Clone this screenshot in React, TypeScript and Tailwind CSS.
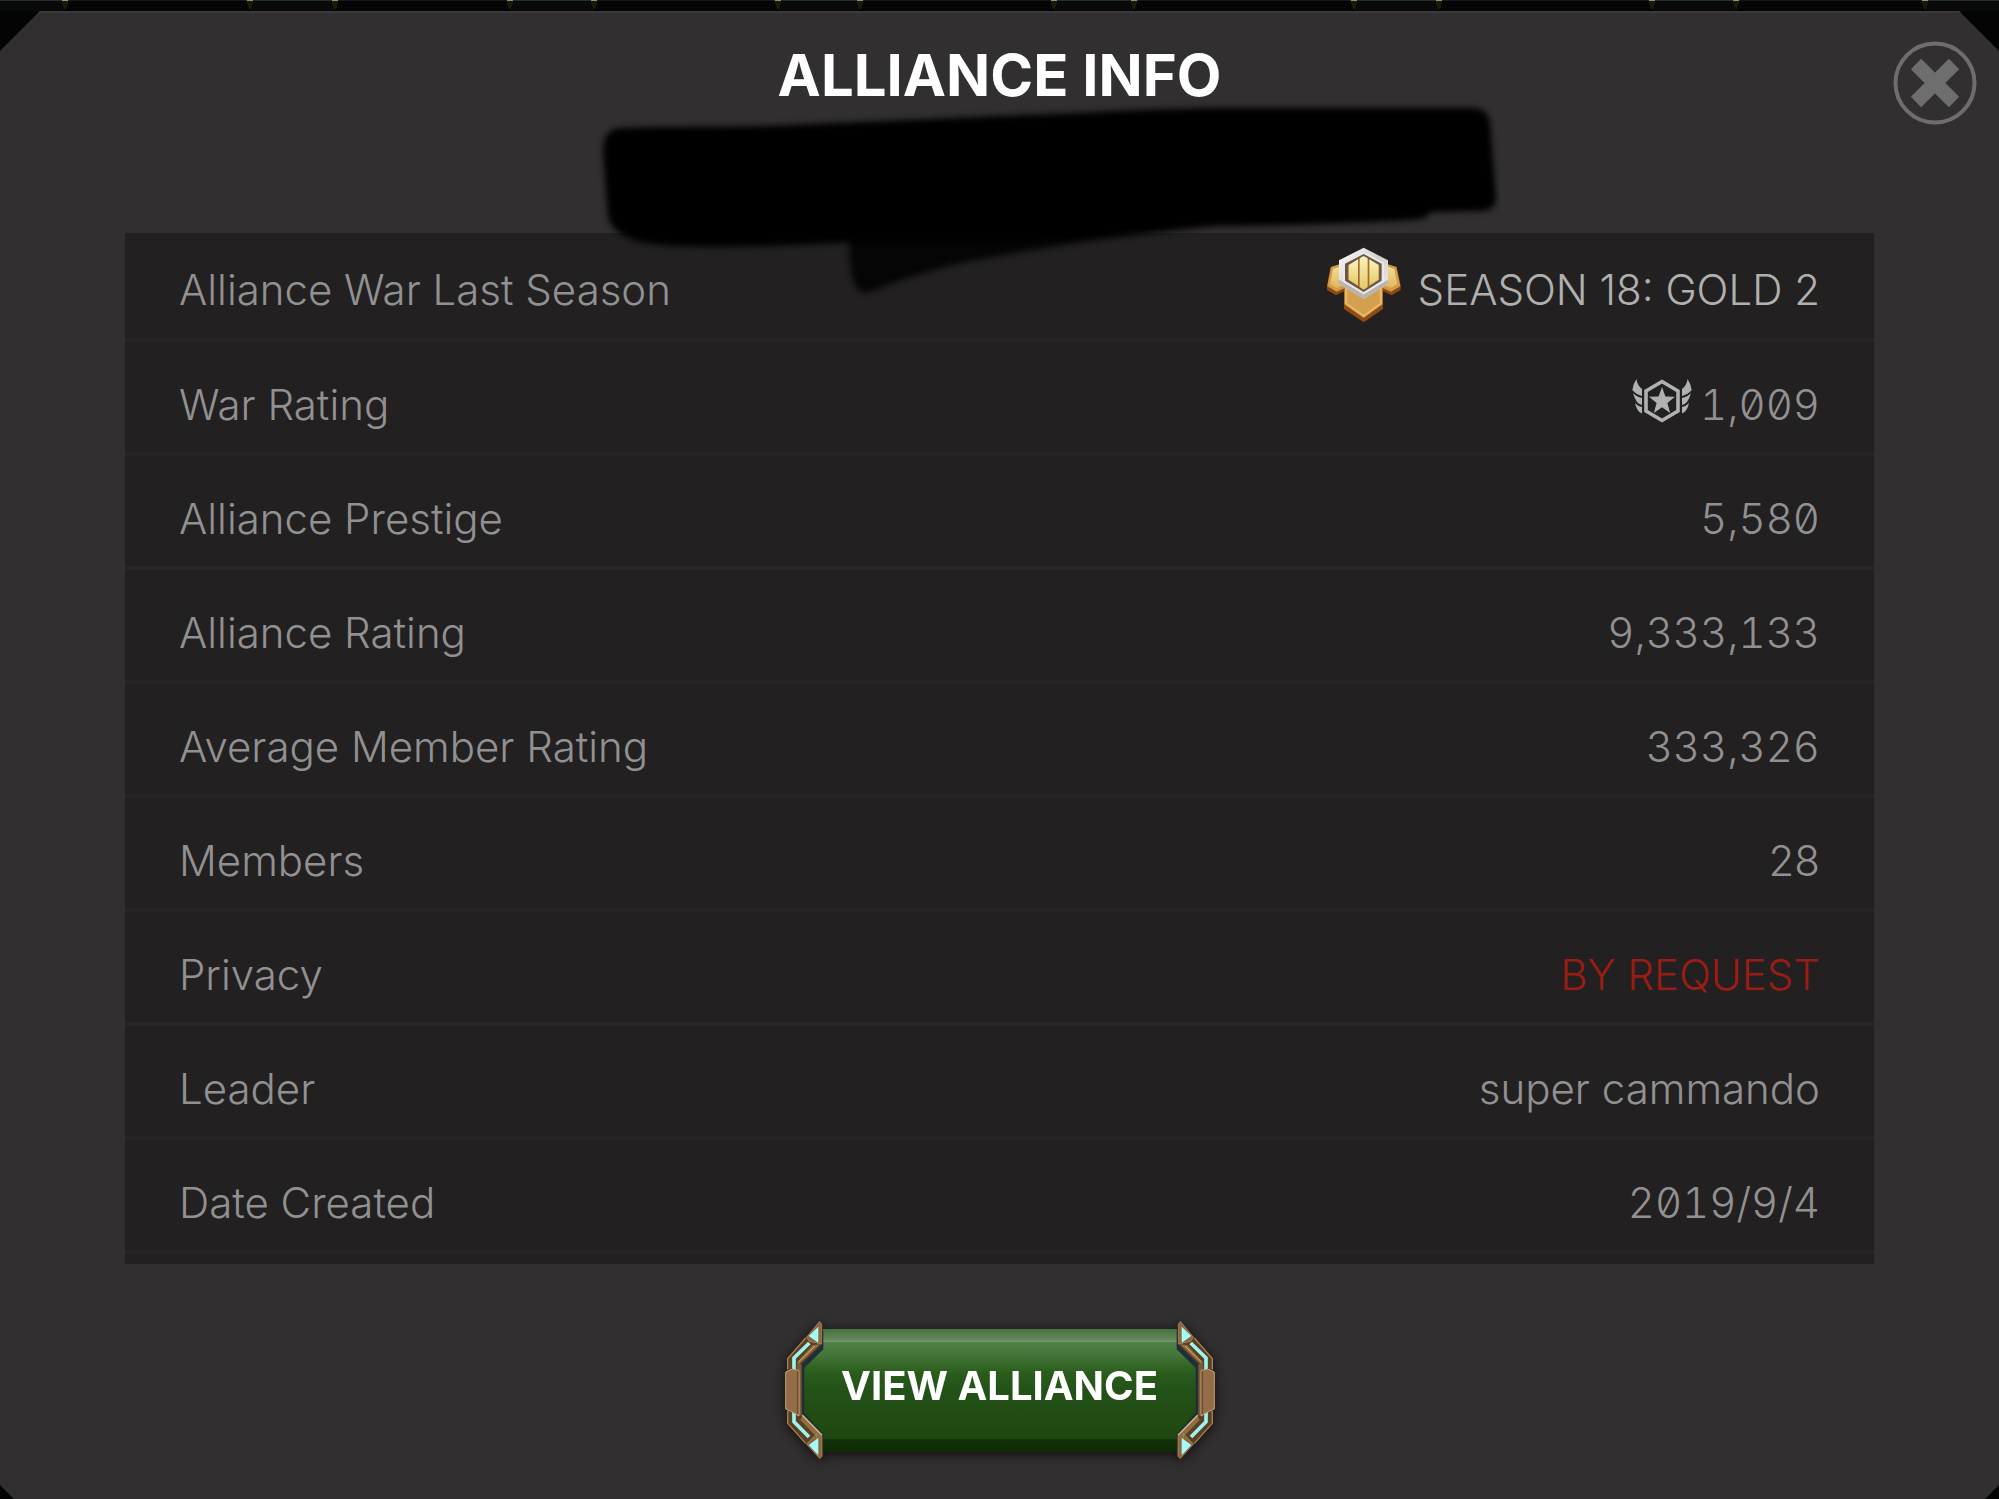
import type { ReactNode } from "react"

type Row = {
  label: string
  value: string
  icon?: ReactNode
  valueClass?: string
}

function SeasonBadge() {
  return (
    <svg viewBox="0 0 270 270" className="size-[90px] shrink-0" aria-hidden="true">
      <defs>
        <linearGradient id="goldWing" x1="0" y1="0" x2="0" y2="1">
          <stop offset="0" stopColor="#f3e29a" />
          <stop offset="1" stopColor="#dfb65e" />
        </linearGradient>
        <linearGradient id="goldBar" x1="0" y1="0" x2="0" y2="1">
          <stop offset="0" stopColor="#fbf3bd" />
          <stop offset="1" stopColor="#e3c867" />
        </linearGradient>
        <linearGradient id="silverRim" x1="0" y1="0" x2="1" y2="1">
          <stop offset="0" stopColor="#ffffff" />
          <stop offset="0.5" stopColor="#d3cfcd" />
          <stop offset="1" stopColor="#f1eeec" />
        </linearGradient>
      </defs>
      {/* wings */}
      <path d="M44 78 L90 66 V148 L60 163 L33 147 V133Z" fill="#8a4a14" />
      <path d="M242 78 L196 66 V148 L227 163 L254 147 V133Z" fill="#8a4a14" />
      <path d="M45 78 L100 60 V135 L62 152 L34 136Z" fill="#d49a45" />
      <path d="M241 78 L186 60 V135 L225 152 L253 136Z" fill="#d49a45" />
      <path d="M51 84 L90 70 V128 L63 141 L43 130Z" fill="url(#goldWing)" />
      <path d="M235 84 L196 70 V128 L224 141 L244 130Z" fill="url(#goldWing)" />
      {/* lower plate */}
      <path d="M84 140 H201 V204 L143 244 L84 204Z" fill="#8f4d15" />
      <path d="M86 135 H199 V190 L143 230 L86 190Z" fill="#e8b765" />
      <path d="M94 135 H191 V186 L143 221 L94 186Z" fill="#d2a04e" />
      {/* silver hexagon */}
      <path d="M143 20 L216 58 V128 L143 174 L69 128 V58Z" fill="url(#silverRim)" />
      <path d="M69 116 L143 160 L216 116 V128 L143 174 L69 128Z" fill="#b9b4b2" />
      <path d="M143 33 L204 65 V122 L143 160 L81 122 V65Z" fill="#ece9e7" />
      <path d="M143 39 L197 68 V119 L143 153 L87 119 V68Z" fill="#65564e" />
      <path d="M143 47 L190 73 V116 L143 146 L95 116 V73Z" fill="#a5682a" />
      {/* bars */}
      <path d="M98 72 L126 55 V134 L98 116Z" fill="url(#goldBar)" />
      <path d="M131 52 L143 45 L155 52 V138 L143 146 L131 138Z" fill="url(#goldBar)" />
      <path d="M160 55 L188 72 V116 L160 134Z" fill="url(#goldBar)" />
    </svg>
  )
}

function WarEmblem() {
  return (
    <svg viewBox="0 0 60 44" className="h-[44px] w-[60px] shrink-0" fill="#b1b1b1" aria-hidden="true">
      <path d="M30 2.5 L46 12 V32 L30 41.5 L14 32 V12Z" fill="none" stroke="#b1b1b1" strokeWidth="3.6" />
      <path d="M30 8 L33.4 17.6 L43 17.8 L35.4 24 L38.2 34 L30 28.2 L21.8 34 L24.6 24 L17 17.8 L26.6 17.6Z" />
      <path d="M4.5 0 Q5 6 10 10 V17 Q4 15.5 0.3 11 Q1 5 4.5 0Z" />
      <path d="M1 14 Q4.5 18 10 19 V26 Q4 25 1 14Z" />
      <path d="M3 24 Q6 27.5 10 28 V34.5 Q5 33 3 24Z" />
      <path d="M55.5 0 Q55 6 50 10 V17 Q56 15.5 59.7 11 Q59 5 55.5 0Z" />
      <path d="M59 14 Q55.5 18 50 19 V26 Q56 25 59 14Z" />
      <path d="M57 24 Q54 27.5 50 28 V34.5 Q55 33 57 24Z" />
    </svg>
  )
}

const rows: Row[] = [
  {
    label: "Alliance War Last Season",
    value: "SEASON 18: GOLD 2",
    icon: <SeasonBadge />,
    valueClass: "gap-3 text-[#b1b0b0] [font-feature-settings:'zero']",
  },
  {
    label: "War Rating",
    value: "1,009",
    icon: <WarEmblem />,
    valueClass: "gap-2 [font-feature-settings:'zero','tnum']",
  },
  { label: "Alliance Prestige", value: "5,580", valueClass: "[font-feature-settings:'zero','tnum']" },
  { label: "Alliance Rating", value: "9,333,133", valueClass: "[font-feature-settings:'zero','tnum']" },
  { label: "Average Member Rating", value: "333,326", valueClass: "[font-feature-settings:'zero','tnum']" },
  { label: "Members", value: "28" },
  { label: "Privacy", value: "BY REQUEST", valueClass: "text-[#9c1c13]" },
  { label: "Leader", value: "super cammando" },
  { label: "Date Created", value: "2019/9/4", valueClass: "[font-feature-settings:'zero','tnum']" },
]

// Pairs of gold studs peeking out above the panel, joined by a lit rail
const rails = [
  [-10, 65],
  [250, 335],
  [510, 594],
  [778, 860],
  [1054, 1134],
  [1354, 1439],
  [1652, 1736],
  [1925, 2010],
]

function TopTrim() {
  return (
    <svg
      viewBox="0 0 1999 11"
      preserveAspectRatio="none"
      className="h-[11px] w-full"
      aria-hidden="true"
    >
      <rect width="1999" height="1" fill="#171718" />
      {rails.map(([from, to]) => (
        <g key={from}>
          <rect x={from} width={to - from} height="11" fill="#080a09" />
          <rect x={from} width={to - from} height="1" fill="#2b302f" />
          {[from, to].map((x) => (
            <g key={x}>
              <path d={`M${x - 4} 0 h8 l-3 9 h-2Z`} fill="#1a190a" />
              <rect x={x - 3} width="6" height="1" fill="#8a9a6a" />
            </g>
          ))}
        </g>
      ))}
    </svg>
  )
}

/* Marker stroke that hides the alliance name */
function Redaction() {
  return (
    <svg
      viewBox="500 90 1000 220"
      className="pointer-events-none absolute top-[78px] left-1/2 z-10 w-[1000px] -translate-x-1/2"
      aria-hidden="true"
    >
      <defs>
        <filter id="soft" x="-5%" y="-10%" width="110%" height="120%" colorInterpolationFilters="sRGB">
          <feGaussianBlur stdDeviation="3" />
        </filter>
      </defs>
      <g filter="url(#soft)">
        <path
          d="M849 240 Q849 268 855 284 Q860 294 872 290 Q915 272 970 260 Q1060 244 1120 235 L1215 222 L1100 215Z"
          fill="#050505"
        />
        <path
          d="M618 127 C680 125 740 127 790 124 L1000 115 C1080 112 1150 108 1215 107 H1472 Q1488 107 1490 122 L1496 196 Q1497 209 1482 210 L1430 211 Q1428 218 1412 219 Q1300 225 1215 225 Q1160 231 1100 238 Q960 244 850 241 Q760 247 682 245 Q612 244 608 214 L603 150 Q603 130 618 127Z"
          fill="#000000"
        />
      </g>
    </svg>
  )
}

function ButtonClamp({ side }: { side: "left" | "right" }) {
  return (
    <svg
      viewBox="30 30 120 420"
      className={
        side === "left"
          ? "absolute top-0 left-0 h-[140px] w-[40px]"
          : "absolute top-0 right-0 h-[140px] w-[40px] -scale-x-100"
      }
      aria-hidden="true"
    >
      <path d="M145 60 V118 L88 174 V308 L145 372 V440 L136 440 V380 L76 320 V160 L136 100 V60Z" fill="#1e2f3a" />
      {/* upper arm */}
      <path d="M135 32 L142 42 V102 L78 164 V190 H36 V145 L92 82Z" fill="#5b3f22" />
      <path d="M133 35 L95 82 L103 94 L139 102 V42Z" fill="#8a6640" stroke="#b3936a" strokeWidth="2" />
      <path d="M135 103 L72 163 L66 158 L112 106Z" fill="#8e6d42" />
      <path d="M120 108 L70 156" stroke="#c4ad78" strokeWidth="3" />
      <path d="M92 84 L38 146 V178" stroke="#a88259" strokeWidth="4" fill="none" />
      <path d="M103 99 L57 144 V180" stroke="#9bf5ee" strokeWidth="11" fill="none" />
      <path d="M130 50 V98 L101 78Z" fill="#a5fbf6" />
      {/* lower arm */}
      <path d="M36 296 V340 L92 402 L134 448 L143 440 V375 L85 315 L72 300Z" fill="#5b3f22" />
      <path d="M82 318 L139 377 L128 384 L76 330Z" fill="#8e6d42" />
      <path d="M82 316 L141 376" stroke="#d8c592" strokeWidth="4" />
      <path d="M140 378 V438 L134 445 L95 402 L126 370 L124 388Z" fill="#8a6640" stroke="#b3936a" strokeWidth="2" />
      <path d="M38 304 V340 L92 400" stroke="#a88259" strokeWidth="4" fill="none" />
      <path d="M57 300 V335 L102 381" stroke="#9bf5ee" strokeWidth="11" fill="none" />
      <path d="M130 384 V436 L101 405Z" fill="#a5fbf6" />
      {/* middle plate */}
      <path d="M66 160 L80 164 V316 L66 318Z" fill="#7c5a36" />
      <path d="M32 186 L52 177 L72 181 V318 L52 306 L32 297Z" fill="#936c48" stroke="#c2a077" strokeWidth="3" />
      <path d="M68 182 V312" stroke="#6a4a2c" strokeWidth="4" />
    </svg>
  )
}

export default function App() {
  return (
    <div className="flex min-h-screen flex-col bg-[#050405] font-['Inter',sans-serif]">
      <TopTrim />

      <main
        className="
          relative flex flex-1 flex-col
          border-t-2 border-[#3c3a39]
          bg-[#322f30]
          [clip-path:polygon(40px_0,calc(100%-40px)_0,100%_40px,100%_calc(100%-14px),calc(100%-14px)_100%,14px_100%,0_calc(100%-14px),0_40px)]
        "
      >
        {/* Header */}
        <header className="h-[220px] shrink-0 pt-[26px]">
          <h1 className="text-center text-[58px] leading-[72px] font-bold text-white">ALLIANCE INFO</h1>
          <button type="button" aria-label="Close" className="absolute top-[28px] right-[22px] size-[84px]">
            <svg viewBox="0 0 84 84" fill="none" stroke="#6f6e6e" aria-hidden="true">
              <circle cx="42" cy="42" r="39.5" strokeWidth="4" />
              <path d="M23 23 L61 61 M61 23 L23 61" strokeWidth="14.5" />
            </svg>
          </button>
        </header>

        <Redaction />

        {/* Alliance details */}
        <section className="mx-[125px] bg-[#222021] pb-[10px]">
          <table className="w-full border-collapse text-[42px] leading-[52px] text-[#929192]">
            <tbody>
              {rows.map((row) => (
                <tr
                  key={row.label}
                  className="
                    h-[114px] border-b-4 border-[#272526]
                    first:h-[107px]
                    [&:not(:first-child)>td]:pt-2
                    [&:not(:first-child)>th]:pt-4
                  "
                >
                  <th scope="row" className="pt-2 pl-[54px] text-left font-light">
                    {row.label}
                  </th>
                  <td className="pr-[54px] font-light">
                    <div className={`flex items-center justify-end ${row.valueClass ?? ""}`}>
                      {row.icon}
                      <span className="pt-2">{row.value}</span>
                    </div>
                  </td>
                </tr>
              ))}
            </tbody>
          </table>
        </section>

        {/* Action */}
        <div className="flex justify-center pt-[56px] pb-[39px]">
          <button
            type="button"
            className="relative flex h-[140px] w-[430px] items-center justify-center drop-shadow-[0_2px_6px_rgba(0,0,0,0.7)]"
          >
            <span
              className="
                absolute inset-x-[14px] top-[9px] bottom-[8px]
                bg-[linear-gradient(#467240_0%,#64895d_9%,#7c9b75_10%,#517f48_11%,#45773b_20%,#2a5c1c_36%,#235218_50%,#1e4710_89%,#113108_90%,#0e2b05_100%)]
                [clip-path:polygon(24px_0,calc(100%-24px)_0,100%_30px,100%_calc(100%-30px),calc(100%-24px)_100%,24px_100%,0_calc(100%-30px),0_30px)]
              "
            />
            <ButtonClamp side="left" />
            <ButtonClamp side="right" />
            <span className="relative pb-2 text-[40px] leading-[48px] font-bold text-white">VIEW ALLIANCE</span>
          </button>
        </div>
      </main>
    </div>
  )
}
